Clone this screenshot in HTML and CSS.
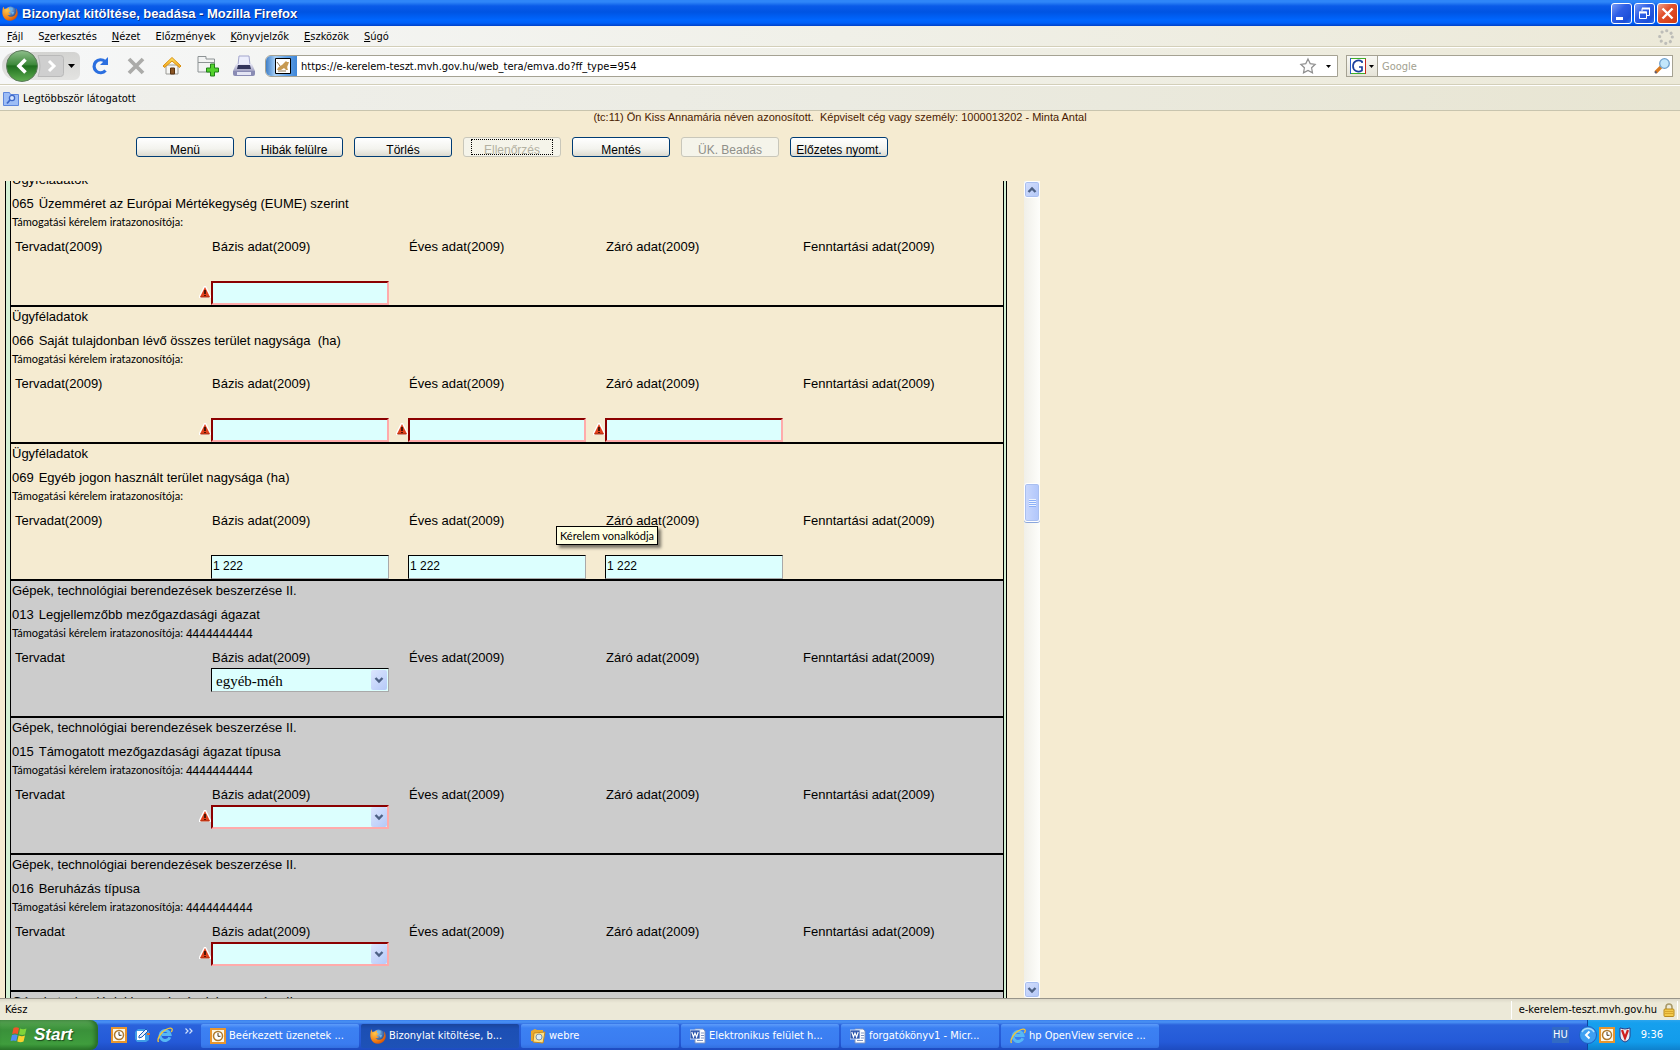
FILE: index.html
```html
<!DOCTYPE html>
<html lang="hu">
<head>
<meta charset="utf-8">
<title>Bizonylat kitöltése, beadása - Mozilla Firefox</title>
<link rel="stylesheet" href="styles.css">
</head>
<body>
<svg class="defs" aria-hidden="true">
  <defs>
    <radialGradient id="gGlobe" cx=".4" cy=".3" r=".7"><stop offset="0" stop-color="#9fd0f5"/><stop offset="1" stop-color="#16418f"/></radialGradient>
    <radialGradient id="gFox" cx=".3" cy=".3" r=".9"><stop offset="0" stop-color="#ffc64a"/><stop offset=".6" stop-color="#f07a12"/><stop offset="1" stop-color="#c23d05"/></radialGradient>
    <linearGradient id="gBack" x1="0" y1="0" x2="0" y2="1"><stop offset="0" stop-color="#8fbf8c"/><stop offset=".45" stop-color="#3f8a3c"/><stop offset=".5" stop-color="#1f6f1e"/><stop offset="1" stop-color="#5fae50"/></linearGradient>
    <linearGradient id="gRoof" x1="0" y1="0" x2="0" y2="1"><stop offset="0" stop-color="#ffe45e"/><stop offset="1" stop-color="#f3a51c"/></linearGradient>
    <linearGradient id="gPrint" x1="0" y1="0" x2="0" y2="1"><stop offset="0" stop-color="#e8e8f6"/><stop offset="1" stop-color="#7f7fa8"/></linearGradient>
    <symbol id="fox" viewBox="0 0 16 16">
      <circle cx="8.500" cy="7.500" r="6" fill="url(#gGlobe)"/>
      <path d="M7 3.500l2-1 2 1-1 2-2 .5zM9 7l3 0-1 3z" fill="#6fb5e8"/>
      <path d="M1.500 1C.2 4 0 8 .8 10.500 2 14 5 16 8.500 15.800c4-.2 7.200-3.500 7.200-7.500 0-2.500-1-4.300-2-5.300.6 1.600.8 3 .4 4.500-.7 2.700-2.600 4.300-5 4.300-1.700 0-2.900-.8-3.600-1.800 1.500.4 2.700-.2 3.500-1.200-1.200-.1-2-.4-2.300-1.100.2-.7 1-1 1.700-1.400.4-.6-.6-1.100-1.300-1.300-.5-.7-.3-1.600.2-2.400-1.200.1-2 .6-2.600 1.300-.8-.2-1.500 0-2 .3-.5-.6-.9-1.200-1.200-3.200z" fill="url(#gFox)"/>
    </symbol>
    <symbol id="clock" viewBox="0 0 16 16">
      <rect x="1" y="1" width="14" height="14" fill="#fdf6e3" stroke="#e8962e" stroke-width="2"/>
      <circle cx="8" cy="8" r="4.500" fill="#fff" stroke="#b07a2c" stroke-width="1.500"/>
      <path d="M8 5v3.300h2.500" fill="none" stroke="#4a3a1a"/>
    </symbol>
    <symbol id="ie" viewBox="0 0 16 16">
      <path d="M12.800 10.200A5 5 0 1 1 13 7.500H5" fill="none" stroke="#57b8f5" stroke-width="3"/>
      <path d="M1.500 15C-.5 12 4 5 9 2.500 12 1 15 .5 15.300 2.500c0 1-.5 1.800-1 2.500" fill="none" stroke="#f4c636" stroke-width="1.300"/>
    </symbol>
    <symbol id="word" viewBox="0 0 16 16">
      <path d="M5 1h8l2 2v12H5z" fill="#fff" stroke="#7d93c0"/>
      <path d="M11 5h3M11 7.500h3M11 10h3M7 12.500h6" stroke="#7d93c0"/>
      <rect x="0" y="2" width="10" height="9" fill="#2f57ad" stroke="#dfe8fa" stroke-width=".8"/>
      <path d="M1.800 4l1.600 5L5 5l1.600 4 1.600-5" fill="none" stroke="#fff" stroke-width="1.200"/>
    </symbol>
    <symbol id="warn" viewBox="0 0 12 12">
      <path d="M6 0h1l5 10v2H0v-2L5 0z" fill="#fff"/>
      <path d="M6 1l5 10H1z" fill="#e0401c"/>
      <path d="M6 4v4M6 9v1" stroke="#2b0b00" stroke-width="1.600"/>
      <path d="M1.500 11h9" stroke="#a52a0a"/>
    </symbol>
    <symbol id="chev" viewBox="0 0 10 10"><path d="M1.500 3L5 6.500 8.500 3" fill="none" stroke="#4d6185" stroke-width="2.400"/></symbol>
  </defs>
</svg>

<header class="titlebar">
  <svg class="i16"><use href="#fox"/></svg>
  <h1>Bizonylat kitöltése, beadása - Mozilla Firefox</h1>
  <div class="winbtns">
    <button class="win" type="button" aria-label="Kis méret"><svg viewBox="0 0 21 21"><path d="M5 15.500h7" stroke="#fff" stroke-width="3"/></svg></button>
    <button class="win" type="button" aria-label="Előző méret"><svg viewBox="0 0 21 21"><path d="M8 8V5.500h7.500v7H13" fill="none" stroke="#fff" stroke-width="1"/><path d="M8 5.500h8" stroke="#fff" stroke-width="2"/><path d="M5.500 9h7v6.500h-7z" fill="none" stroke="#fff"/><path d="M5 9.500h8" stroke="#fff" stroke-width="2"/></svg></button>
    <button class="win close" type="button" aria-label="Bezárás"><svg viewBox="0 0 21 21"><path d="M5.500 5.500l10 10M15.500 5.500l-10 10" stroke="#fff" stroke-width="2.400"/></svg></button>
  </div>
</header>

<nav class="menubar">
  <button type="button"><u>F</u>ájl</button>
  <button type="button">S<u>z</u>erkesztés</button>
  <button type="button"><u>N</u>ézet</button>
  <button type="button">Előz<u>m</u>ények</button>
  <button type="button"><u>K</u>önyvjelzők</button>
  <button type="button"><u>E</u>szközök</button>
  <button type="button"><u>S</u>úgó</button>
  <svg class="i16 throbber" viewBox="0 0 16 16"><circle cx="8" cy="8" r="6.300" fill="none" stroke="#bdbdb8" stroke-width="3.200" stroke-linecap="round" stroke-dasharray=".01 4.938"/></svg>
</nav>

<div class="navbar">
  <div class="history">
    <button type="button" class="back" aria-label="Vissza"><svg viewBox="0 0 32 32"><circle cx="16" cy="16" r="15.500" fill="url(#gBack)" stroke="#5c7a5a"/><path d="M19.500 9.500L13 16l6.500 6.500" fill="none" stroke="#fff" stroke-width="3.600"/></svg></button>
    <button type="button" class="fwd" aria-label="Előre"><svg viewBox="0 0 26 24"><path d="M0 1.500h22.500q3 0 3 3v15q0 3-3 3H0q4-10 0-21z" fill="#cfcfcf" stroke="#b9b9b9"/><path d="M11 7l5 5-5 5" fill="none" stroke="#fff" stroke-width="3"/></svg></button>
    <button type="button" class="drop" aria-label="Előzmények"><svg viewBox="0 0 7 4"><path d="M0 0h7L3.500 4z"/></svg></button>
  </div>
  <div class="tools">
    <button type="button" aria-label="Frissítés"><svg viewBox="0 0 22 22"><path d="M16.500 15.500A6.500 6.500 0 1 1 16 6.500" fill="none" stroke="#2b6fe0" stroke-width="3.200"/><path d="M19 2v8h-8z" fill="#2b6fe0"/></svg></button>
    <button type="button" aria-label="Leállítás"><svg viewBox="0 0 22 22"><path d="M4 4l14 14M18 4L4 18" stroke="#ababa9" stroke-width="3.800"/></svg></button>
    <button type="button" aria-label="Kezdőlap"><svg viewBox="0 0 22 22"><path d="M5 10h12v9H5z" fill="#f6f6f4" stroke="#9a9a96"/><path d="M9.500 13h4v6h-4z" fill="#8a5524" stroke="#5a3310"/><path d="M11 2.500l9 8.500-1.500 1.500L11 6l-7.500 6.500L2 11z" fill="url(#gRoof)" stroke="#d98f12"/></svg></button>
    <button type="button" aria-label="Új lap"><svg viewBox="0 0 22 22"><path d="M1 17V1.500h8V4h8.500v13z" fill="#f2f3f3" stroke="#8d9394"/><path d="M1 7.500h16.500" stroke="#8d9394"/><path d="M13.500 9h4v4h4v4h-4v4h-4v-4h-4v-4h4z" fill="#53d22c" stroke="#23801a"/></svg></button>
    <button type="button" aria-label="Nyomtatás"><svg viewBox="0 0 22 22"><path d="M5 10L6 1h10l1 9z" fill="#eceefc" stroke="#a3a5cc"/><path d="M3 9h16l3 7v3H0v-3z" fill="url(#gPrint)"/><path d="M5 10h12l1 4H4z" fill="#33355c"/><path d="M0 16h22v3q0 2-2 2H2q-2 0-2-2z" fill="#8a8cb4"/><path d="M4 17h14v3H4z" fill="#e4e5f4"/></svg></button>
  </div>
  <div class="urlbox">
    <span class="favicon"><svg class="i16" viewBox="0 0 16 16"><path d="M.5.500h15v15H.5z" fill="#fff" stroke="#000"/><path d="M2 12c1-3 3-4 5-5l4-4 1 1h2l-1 3c-1 1-1 3 0 5h-2l-2-2-3 2z" fill="#c79a52"/><path d="M2 4l3 4M3 13h8" stroke="#8a7450"/></svg></span>
    <input type="text" aria-label="Cím" value="https://e-kerelem-teszt.mvh.gov.hu/web_tera/emva.do?ff_type=954">
    <button type="button" aria-label="Könyvjelző"><svg class="i16" viewBox="0 0 16 16"><path d="M8 1l2.200 4.600 5 .7-3.600 3.500.9 5L8 12.400l-4.500 2.400.9-5L.8 6.300l5-.7z" fill="#fbfbfb" stroke="#8f8f8f" stroke-width="1.200"/></svg></button>
    <button type="button" class="tiny" aria-label="Megnyitás"><svg viewBox="0 0 5 3"><path d="M0 0h5L2.500 3z"/></svg></button>
  </div>
  <div class="search">
    <button type="button" class="engine" aria-label="Kereső"><svg class="i16" viewBox="0 0 16 16"><path d="M.5.500h15v15H.5z" fill="#fff"/><path d="M0 .5h16" stroke="#3fae2a"/><path d="M.5 0v16" stroke="#2758c9"/><path d="M15.500 1v15" stroke="#c8281e"/><path d="M1 15.500h14" stroke="#3fae2a"/><path d="M12 5V3.500C8 1 3 3 3 8s5 7 9 4.500V9H9" fill="none" stroke="#1b3f9c" stroke-width="1.700"/></svg><svg class="arr" viewBox="0 0 5 3"><path d="M0 0h5L2.500 3z"/></svg></button>
    <input type="text" aria-label="Keresés" placeholder="Google">
    <button type="button" aria-label="Keresés indítása"><svg class="i16" viewBox="0 0 16 16"><path d="M7 9l-5.500 5.500" stroke="#d97a20" stroke-width="3.200"/><path d="M2.500 15L1 13.500" stroke="#5a5a72" stroke-width="2"/><circle cx="10.500" cy="5.500" r="4.800" fill="#c2e6fb" stroke="#6fa0cc" stroke-width="1.300"/></svg></button>
  </div>
</div>

<div class="bookmarks">
  <button type="button"><svg class="i16" viewBox="0 0 16 14"><path d="M.5 13.500V.5h6l1 2h8v11z" fill="#9dbdf6" stroke="#5d86dc"/><circle cx="9" cy="6" r="2.600" fill="#d9e8ff" stroke="#3e68c8" stroke-width="1.300"/><path d="M7 8l-3 3.500" stroke="#3e68c8" stroke-width="1.800"/></svg>Legtöbbször látogatott</button>
</div>

<main class="page">
  <p class="ident">(tc:11) Ön Kiss Annamária néven azonosított.&nbsp; Képviselt cég vagy személy: 1000013202 - Minta Antal</p>
  <div class="actions">
    <button type="button">Menü</button>
    <button type="button">Hibák felülre</button>
    <button type="button">Törlés</button>
    <button type="button" class="focus" disabled>Ellenőrzés</button>
    <button type="button">Mentés</button>
    <button type="button" disabled>ÜK. Beadás</button>
    <button type="button">Előzetes nyomt.</button>
  </div>

  <div class="viewport">
    <form class="form">
      <div class="rows">
        <section class="row">
          <h2>Ügyféladatok</h2>
          <p class="code"><span>065</span>Üzemméret az Európai Mértékegység (EUME) szerint</p>
          <p class="ref">Támogatási kérelem iratazonosítója:</p>
          <div class="cells low">
            <div class="cell"><span>Tervadat(2009)</span></div>
            <div class="cell"><label for="b065">Bázis adat(2009)</label><div class="field err"><svg><use href="#warn"/></svg><input id="b065" type="text"></div></div>
            <div class="cell"><span>Éves adat(2009)</span></div>
            <div class="cell"><span>Záró adat(2009)</span></div>
            <div class="cell"><span>Fenntartási adat(2009)</span></div>
          </div>
        </section>
        <section class="row">
          <h2>Ügyféladatok</h2>
          <p class="code"><span>066</span>Saját tulajdonban lévő összes terület nagysága&nbsp; (ha)</p>
          <p class="ref">Támogatási kérelem iratazonosítója:</p>
          <div class="cells low">
            <div class="cell"><span>Tervadat(2009)</span></div>
            <div class="cell"><label for="b066">Bázis adat(2009)</label><div class="field err"><svg><use href="#warn"/></svg><input id="b066" type="text"></div></div>
            <div class="cell"><label for="e066">Éves adat(2009)</label><div class="field err"><svg><use href="#warn"/></svg><input id="e066" type="text"></div></div>
            <div class="cell"><label for="z066">Záró adat(2009)</label><div class="field err"><svg><use href="#warn"/></svg><input id="z066" type="text"></div></div>
            <div class="cell"><span>Fenntartási adat(2009)</span></div>
          </div>
        </section>
        <section class="row">
          <h2>Ügyféladatok</h2>
          <p class="code"><span>069</span>Egyéb jogon használt terület nagysága (ha)</p>
          <p class="ref">Támogatási kérelem iratazonosítója:</p>
          <div class="cells low">
            <div class="cell"><span>Tervadat(2009)</span></div>
            <div class="cell"><label for="b069">Bázis adat(2009)</label><div class="field"><input id="b069" type="text" value="1 222"></div></div>
            <div class="cell"><label for="e069">Éves adat(2009)</label><div class="field"><input id="e069" type="text" value="1 222"></div></div>
            <div class="cell"><label for="z069">Záró adat(2009)</label><div class="field"><input id="z069" type="text" value="1 222"></div><div class="tooltip" role="tooltip">Kérelem vonalkódja</div></div>
            <div class="cell"><span>Fenntartási adat(2009)</span></div>
          </div>
        </section>
        <section class="row gray">
          <h2>Gépek, technológiai berendezések beszerzése II.</h2>
          <p class="code"><span>013</span>Legjellemzőbb mezőgazdasági ágazat</p>
          <p class="ref">Támogatási kérelem iratazonosítója:<b>4444444444</b></p>
          <div class="cells">
            <div class="cell"><span>Tervadat</span></div>
            <div class="cell"><label for="b013">Bázis adat(2009)</label><div class="field pick"><select id="b013"><option>egyéb-méh</option></select><i><svg><use href="#chev"/></svg></i></div></div>
            <div class="cell"><span>Éves adat(2009)</span></div>
            <div class="cell"><span>Záró adat(2009)</span></div>
            <div class="cell"><span>Fenntartási adat(2009)</span></div>
          </div>
        </section>
        <section class="row gray">
          <h2>Gépek, technológiai berendezések beszerzése II.</h2>
          <p class="code"><span>015</span>Támogatott mezőgazdasági ágazat típusa</p>
          <p class="ref">Támogatási kérelem iratazonosítója:<b>4444444444</b></p>
          <div class="cells">
            <div class="cell"><span>Tervadat</span></div>
            <div class="cell"><label for="b015">Bázis adat(2009)</label><div class="field pick err"><svg><use href="#warn"/></svg><select id="b015"><option></option></select><i><svg><use href="#chev"/></svg></i></div></div>
            <div class="cell"><span>Éves adat(2009)</span></div>
            <div class="cell"><span>Záró adat(2009)</span></div>
            <div class="cell"><span>Fenntartási adat(2009)</span></div>
          </div>
        </section>
        <section class="row gray">
          <h2>Gépek, technológiai berendezések beszerzése II.</h2>
          <p class="code"><span>016</span>Beruházás típusa</p>
          <p class="ref">Támogatási kérelem iratazonosítója:<b>4444444444</b></p>
          <div class="cells">
            <div class="cell"><span>Tervadat</span></div>
            <div class="cell"><label for="b016">Bázis adat(2009)</label><div class="field pick err"><svg><use href="#warn"/></svg><select id="b016"><option></option></select><i><svg><use href="#chev"/></svg></i></div></div>
            <div class="cell"><span>Éves adat(2009)</span></div>
            <div class="cell"><span>Záró adat(2009)</span></div>
            <div class="cell"><span>Fenntartási adat(2009)</span></div>
          </div>
        </section>
        <section class="row gray">
          <h2>Gépek, technológiai berendezések beszerzése II.</h2>
        </section>
      </div>
    </form>
    <div class="scrollbar" aria-hidden="true">
      <span class="sbtn up"><svg><use href="#chev"/></svg></span>
      <span class="space-a"></span>
      <span class="thumb"><svg viewBox="0 0 7 8"><path d="M0 .5h7M0 2.500h7M0 4.500h7M0 6.500h7" stroke="#eef4fe"/><path d="M0 1.500h7M0 3.500h7M0 5.500h7M0 7.500h7" stroke="#8cb0f8"/></svg></span>
      <span class="space-b"></span>
      <span class="sbtn"><svg><use href="#chev"/></svg></span>
    </div>
  </div>
</main>

<div class="status">
  <span>Kész</span>
  <span class="host">e-kerelem-teszt.mvh.gov.hu<svg viewBox="0 0 12 14"><path d="M3 7V4a3 3 0 0 1 6 0v3" fill="none" stroke="#a89a6a" stroke-width="1.600"/><rect x="1" y="6" width="10" height="7.500" rx="1" fill="#f2c94a" stroke="#b98a1c"/><path d="M2 8.500h8M2 10.500h8" stroke="#d9a52c"/></svg></span>
</div>

<footer class="taskbar">
  <button type="button" class="start"><svg viewBox="0 0 18 18"><path d="M3.500 2Q6 .5 9 2L7.800 8Q5 6.800 2.200 8z" fill="#f0542a"/><path d="M10 2.500Q13 4 16.500 2.500L15 8.500Q12 9.500 9 8.300z" fill="#7fd43a"/><path d="M2 9Q5 7.800 7.600 9L6.300 15Q3.500 13.800.6 15z" fill="#4f8df5"/><path d="M8.600 9.500Q12 11 15 9.500L13.500 15.500Q10.500 17 7.300 15.500z" fill="#fbd22e"/></svg>Start</button>
  <div class="quick">
    <button type="button" aria-label="Outlook"><svg class="i16"><use href="#clock"/></svg></button>
    <button type="button" aria-label="Asztal megjelenítése"><svg class="i16" viewBox="0 0 16 16"><path d="M1 5l3-3h9l2 3v8l-3 2H3l-2-3z" fill="#3f9de8"/><path d="M3 4h8v9H3z" fill="#fff"/><path d="M5 9l7-7 2 2-6 6-3 1z" fill="#e6eefc" stroke="#1d5cb8"/><path d="M13 6h3v2h-3z" fill="#e06a2a"/></svg></button>
    <button type="button" aria-label="Internet Explorer"><svg class="i16"><use href="#ie"/></svg></button>
    <button type="button" class="more" aria-label="Továbbiak"><svg viewBox="0 0 8 6"><path d="M.5.500L3 3 .5 5.500M4.500.500L7 3 4.500 5.500" fill="none" stroke="#cfe0fb" stroke-width="1.200"/></svg></button>
  </div>
  <div class="tasks">
    <button type="button"><svg class="i16"><use href="#clock"/></svg>Beérkezett üzenetek ...</button>
    <button type="button" class="on"><svg class="i16"><use href="#fox"/></svg>Bizonylat kitöltése, b...</button>
    <button type="button"><svg class="i16" viewBox="0 0 16 16"><path d="M1 3l4-2 2 1h6v11H1z" fill="#e9a92c"/><path d="M4 5l11-1-2 11-10-1z" fill="#fce28a" stroke="#c98a1a"/><circle cx="9" cy="9" r="3" fill="#d9eefb" stroke="#7d93ab"/></svg>webre</button>
    <button type="button"><svg class="i16"><use href="#word"/></svg>Elektronikus felület h...</button>
    <button type="button"><svg class="i16"><use href="#word"/></svg>forgatókönyv1 - Micr...</button>
    <button type="button"><svg class="i16"><use href="#ie"/></svg>hp OpenView service ...</button>
  </div>
  <span class="lang">HU</span>
  <div class="tray">
    <button type="button" class="expand" aria-label="Rejtett ikonok"><svg viewBox="0 0 18 18"><circle cx="9" cy="9" r="8.500" fill="#3fa0f2" stroke="#1c5fc4"/><path d="M3 6a7 7 0 0 1 12 0" fill="none" stroke="#a9dbfb" stroke-width="1.500"/><path d="M10.500 5.500L7 9l3.500 3.500" fill="none" stroke="#fff" stroke-width="2"/></svg></button>
    <svg class="i16"><use href="#clock"/></svg>
    <svg class="i16" viewBox="0 0 16 16"><path d="M3 1l5 1 5-1v8c0 3-2 5-5 6-3-1-5-3-5-6z" fill="#e9edf4" stroke="#2b3f86"/><path d="M5 3l3 8 3-8" fill="none" stroke="#d01f1f" stroke-width="2.200"/></svg>
    <time>9:36</time>
  </div>
</footer>
</body>
</html>
```
FILE: styles.css
```css
* { box-sizing: border-box; }

:root {
  --sand: #f5ebd1;
  --ui: "DejaVu Sans Condensed", "DejaVu Sans", sans-serif;
  --form: "Liberation Sans", Arial, sans-serif;
}

body {
  margin: 0;
  height: 100vh;
  display: flex;
  flex-direction: column;
  overflow: hidden;
  background: var(--sand);
  color: #000;
  font: 11px/16px var(--ui);
}

h1, h2, p { margin: 0; font-weight: normal; }

button, input, select {
  margin: 0;
  padding: 0;
  border: 0;
  border-radius: 0;
  background: none;
  color: inherit;
  font: inherit;
  outline: 0;
}

svg { display: block; flex: none; overflow: visible; }
.defs { position: absolute; width: 0; height: 0; }
.i16 { width: 16px; height: 16px; }

/* Title bar */
.titlebar {
  flex: none;
  height: 26px;
  display: flex;
  align-items: center;
  gap: 4px;
  padding: 0 2px;
  background: linear-gradient(#2f86f8 0, #2f86f8 2px, #0a5be8 6px, #0054e3 12px, #0066ff 20px, #0060f8 23px, #0041c8 26px);
}
.titlebar h1 {
  flex: 1;
  padding-top: 1px;
  color: #fff;
  font: bold 13px/16px var(--form);
  text-shadow: 1px 1px 0 #0a2a80;
}
.winbtns { display: flex; gap: 2px; }
.win {
  width: 21px;
  height: 21px;
  border: 1px solid #fff;
  border-radius: 3px;
  background: linear-gradient(135deg, #7b9df5, #2f5fe6 40%, #1c4fd8 80%, #2b72f2);
}
.win svg { width: 21px; height: 21px; margin: -1px; }
.win.close { background: linear-gradient(135deg, #f0a08a, #e2512c 40%, #cf3a12); }

/* Menus and toolbars */
.menubar, .navbar, .bookmarks {
  flex: none;
  display: flex;
  align-items: center;
  background: linear-gradient(90deg, #f6f7f8, #f0f0e8 50%, #ece9d8);
}
.menubar {
  height: 21px;
  gap: 15px;
  padding: 1px 6px 0 7px;
  border-bottom: 1px solid #d3cfb9;
}
.throbber { margin-left: auto; }
.navbar {
  height: 38px;
  padding: 0 7px 0 2px;
  border-top: 1px solid #fff;
  border-bottom: 1px solid #d3cfb9;
}
.history {
  width: 78px;
  height: 28px;
  display: flex;
  align-items: center;
  padding-left: 4px;
  border-radius: 14px 6px 6px 14px;
  background: linear-gradient(#d3d3d1, #e3e3e1);
}
.back, .back svg { width: 32px; height: 32px; }
.back { margin: -2px 0; }
.fwd svg { width: 26px; height: 24px; }
.drop { margin-left: 4px; }
.drop svg { width: 7px; height: 4px; }
.tools { display: flex; gap: 14px; padding: 0 10px 0 9px; }
.tools svg { width: 22px; height: 22px; }
.urlbox, .search {
  height: 22px;
  display: flex;
  align-items: center;
  border: 1px solid #a5a293;
  background: #fff;
}
.urlbox {
  flex: 1;
  gap: 4px;
  border-radius: 6px 0 0 6px;
  overflow: hidden;
}
.favicon {
  width: 31px;
  height: 20px;
  display: grid;
  place-items: center;
  padding-left: 3px;
  background: linear-gradient(90deg, #3f7fc8, #a8d0f6 30%, #6aa8ea 60%, #3f86d8);
}
.urlbox input, .search input { flex: 1; min-width: 0; height: 20px; padding-top: 1px; }
.tiny { padding: 6px; }
.tiny svg, .arr { width: 5px; height: 3px; }
.search { flex: 0 0 327px; margin-left: 8px; padding-right: 2px; }
.engine {
  height: 20px;
  width: 31px;
  display: flex;
  align-items: center;
  gap: 3px;
  padding-left: 3px;
  border-right: 1px solid #a5a293;
  background: linear-gradient(#f8f8f4, #e6e4d8);
}
.search input { padding-left: 4px; }
.search input::placeholder { color: #a29f90; opacity: 1; }
.bookmarks {
  height: 26px;
  padding: 2px 3px 0;
  border-top: 1px solid #fff;
  border-bottom: 1px solid #c8c4ae;
  background: linear-gradient(90deg, #f0f0ec, #ebebe2 50%, #e8e5d2);
}
.bookmarks button { display: flex; align-items: center; gap: 4px; }

/* Page */
.page { flex: 1; min-height: 0; display: flex; flex-direction: column; }
.ident {
  color: #4a1a00;
  font: 11px/12px var(--form);
  text-align: center;
}
.actions { display: flex; gap: 11px; padding: 14px 136px 24px; }
.actions button {
  position: relative;
  width: 98px;
  height: 20px;
  padding-top: 6px;
  border: 1px solid #003c74;
  border-radius: 3px;
  background: linear-gradient(#fff, #f3f3ee 60%, #dcdad0);
  font: 12px/12px var(--form);
  white-space: nowrap;
}
.actions button:disabled {
  border-color: #c9c7ba;
  background: #f5f4ea;
  color: #8f8f89;
}
.actions .focus:disabled { color: #b3b1a2; }
.focus::after {
  content: "";
  position: absolute;
  inset: 1px 7px;
  border: 1px dotted #000;
}

.viewport { flex: 1; min-height: 0; display: flex; gap: 17px; padding-left: 5px; overflow: hidden; }
.form {
  flex: none;
  width: calc(60% - 3px);
  display: flex;
  padding: 0 2px 0 4px;
  border: solid #000;
  border-width: 0 1px;
  background: #d3f0d3;
}
.rows {
  flex: 1;
  margin-top: -11px;
  border: solid #000;
  border-width: 0 1px;
  background: var(--sand);
}
.row {
  height: 137px;
  border-bottom: 2px solid #000;
  font: 13px/20px var(--form);
}
.gray { background: #ccc; }
.row h2 { padding-left: 1px; font-size: 13px; line-height: 20px; }
.code { display: flex; gap: 5px; padding: 1px 0 0 1px; line-height: 26px; }
.ref { display: flex; gap: 3px; padding-left: 1px; font: 11px/10px Lato, var(--form); }
.ref b { font: 12px/12px var(--form); }
.ref { height: 10px; }
.cells {
  display: grid;
  grid-template-columns: repeat(5, 1fr);
  padding: 10px 4px 0 3px;
}
.cell { position: relative; }
.cell > label, .cell > span { display: block; padding-left: 1px; }
.low .field { margin-top: 24px; }
.field { display: flex; align-items: center; width: 178px; height: 24px; }
.field.err { width: 190px; margin-left: -12px; }
.field > svg { width: 12px; height: 12px; margin-bottom: 2px; }
.field input, .field select {
  flex: 1;
  min-width: 0;
  height: 24px;
  border: 1px solid;
  border-color: #000 #a9a9a9 #a9a9a9 #000;
  background: #dcfffe;
}
.field input { padding: 0 1px 3px; font: 12px/18px var(--form); }
.field select { appearance: none; padding: 1px 20px 0 4px; font: 15px/20px "Liberation Serif", serif; }
.field.err input, .field.err select { border: 2px solid; border-color: #8b0000 #ffabab #ffabab #8b0000; }
.pick i {
  width: 16px;
  height: 20px;
  display: grid;
  place-items: center;
  margin-left: -18px;
  margin-right: 2px;
  border-radius: 2px;
  background: linear-gradient(135deg, #dce6fe, #b5c9f8);
  pointer-events: none;
}
.pick i svg { width: 10px; height: 10px; }
.tooltip {
  position: absolute;
  top: 15px;
  left: -49px;
  padding: 1px 3px;
  border: 1px solid #000;
  background: #ffffe1;
  box-shadow: 3px 3px 3px rgba(0, 0, 0, .5);
  font: 11px/15px Lato, var(--form);
  white-space: nowrap;
}

/* Scroll bar */
.scrollbar {
  width: 16px;
  display: flex;
  flex-direction: column;
  background: linear-gradient(90deg, #f0efe9, #fefefb);
}
.sbtn, .thumb {
  flex: none;
  display: grid;
  place-items: center;
  height: 17px;
  border: 1px solid #fff;
  border-radius: 3px;
  background: linear-gradient(135deg, #d3defd, #b4c8f7);
  box-shadow: inset 0 0 0 1px #a9bff0;
}
.sbtn svg { width: 10px; height: 10px; }
.up svg { transform: rotate(180deg); }
.thumb { height: 39px; background: linear-gradient(90deg, #cad8fd, #b0c6fb); box-shadow: inset 0 0 0 1px #a9bff0, 0 1px 0 #8ba6dc; }
.thumb svg { width: 7px; height: 8px; }
.space-a { flex: 285; }
.space-b { flex: 459; }

/* Status bar */
.status {
  flex: none;
  height: 22px;
  display: flex;
  justify-content: space-between;
  align-items: center;
  padding: 0 2px 0 5px;
  border-top: 1px solid #97948a;
  background: linear-gradient(#dcd8c8, #ece9d8 4px);
}
.host {
  display: flex;
  align-items: center;
  gap: 6px;
  padding: 1px 2px 1px 7px;
  border: solid #fff;
  border-width: 0 1px;
}
.host svg { width: 12px; height: 14px; }

/* Task bar */
.taskbar {
  flex: none;
  height: 30px;
  display: flex;
  background: linear-gradient(#3a80ee 0, #4a92f4 2px, #2a62dc 5px, #245ad8 22px, #1d4bc0);
  color: #fff;
}
.start {
  flex: none;
  width: 98px;
  display: flex;
  align-items: center;
  gap: 6px;
  padding-left: 10px;
  border-radius: 0 8px 8px 0;
  background: linear-gradient(#5fa85c 0, #4c9e49 4px, #3a913a 10px, #3f9d3d 24px, #2b7a2b);
  box-shadow: inset -3px 0 4px #276b27;
  font: italic bold 17px/20px var(--form);
  text-shadow: 1px 1px 1px #1c4a1c;
}
.start svg { width: 18px; height: 18px; }
.quick {
  flex: none;
  width: 103px;
  display: flex;
  align-items: center;
  gap: 7px;
  padding-left: 13px;
}
.more { margin: 0 0 8px 5px; }
.more svg { width: 8px; height: 6px; }
.tasks { flex: 1; min-width: 0; display: flex; gap: 2px; padding: 4px 0 2px; }
.tasks button {
  flex: 0 1 158px;
  min-width: 0;
  height: 24px;
  display: flex;
  align-items: center;
  gap: 3px;
  padding: 0 9px;
  border-radius: 2px;
  background: linear-gradient(#5d9cfa 0, #3c81f3 4px, #3a7cf0 20px, #3370e0);
  text-align: left;
  white-space: nowrap;
}
.tasks .on { background: linear-gradient(#1a459c 0, #1c4fb4 5px, #1e52b7); }
.lang { align-self: center; padding: 0 1px; margin-right: 18px; background: #316ac5; }
.tray {
  display: flex;
  align-items: center;
  gap: 2px;
  padding-right: 17px;
  border-left: 1px solid #0d47a0;
  background: linear-gradient(#2ba5ee 0, #16a0ee 3px, #129ceb 22px, #0e80cc);
}
.expand { margin-left: -9px; }
.expand svg { width: 18px; height: 18px; }
.tray time { margin-left: 6px; }
```
